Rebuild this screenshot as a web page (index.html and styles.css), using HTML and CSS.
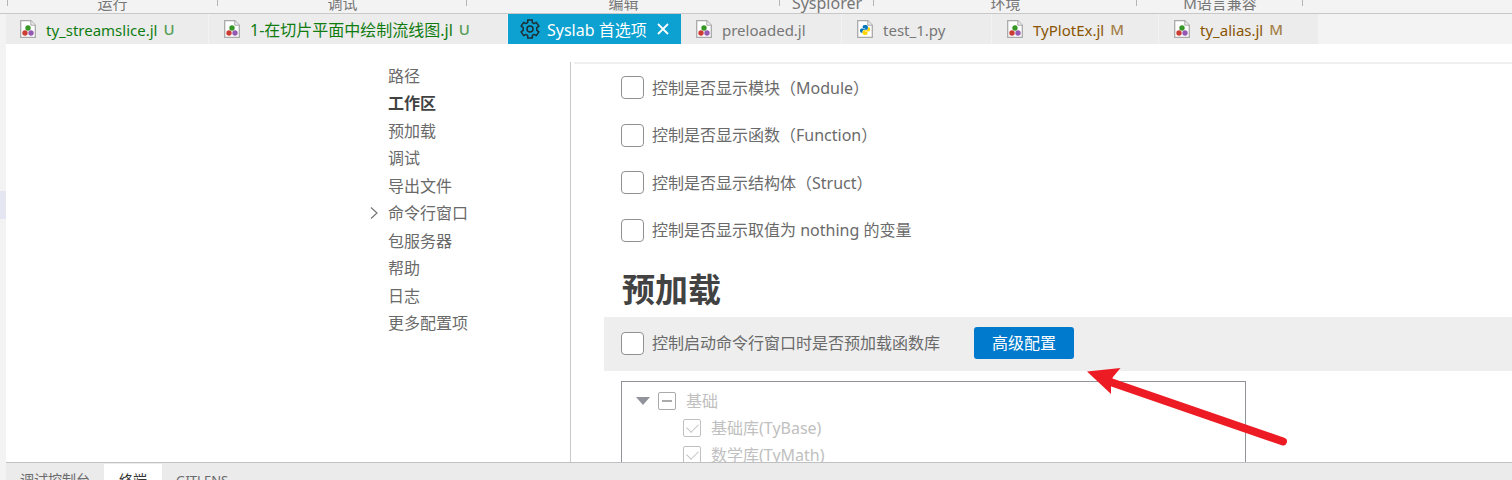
FILE: index.html
```html
<!DOCTYPE html>
<html lang="zh-CN">
<head>
<meta charset="utf-8">
<title>Syslab 首选项</title>
<link rel="stylesheet" href="styles.css">
</head>
<body>
<svg class="defs" aria-hidden="true">
  <symbol id="page" viewBox="0 0 16 18">
    <path d="M.7.7h10.1l4.5 4.5v12.1H.7z" fill="#fff" stroke="#a9a9a9" stroke-width="1.3"/>
    <path d="M10.8.7v4.5h4.5" fill="#eee" stroke="#a9a9a9"/>
  </symbol>
  <symbol id="julia" viewBox="0 0 16 18">
    <use href="#page"/>
    <circle cx="8" cy="8" r="2.7" fill="#389826"/>
    <circle cx="5" cy="13" r="2.7" fill="#cb3c33"/>
    <circle cx="11" cy="13" r="2.7" fill="#9558b2"/>
  </symbol>
  <symbol id="python" viewBox="0 0 16 18">
    <use href="#page"/>
    <path d="M8 5c-2 0-2.3.8-2.3 1.7V8h2.6v.6H4.6C3.500 8.600 3 9.500 3 10.700s.6 2 1.600 2h1v-1.400c0-.9.7-1.500 1.600-1.500h2.300c.8 0 1.400-.6 1.400-1.400V6.700C10.900 5.500 10 5 8 5z" fill="#0277bd"/>
    <path d="M8.200 15c2 0 2.300-.8 2.300-1.700V12H7.900v-.6h3.700c1.100 0 1.600-.9 1.600-2.100s-.6-2-1.600-2h-.7v1.400c0 .9-.7 1.500-1.600 1.500H7c-.8 0-1.400.6-1.400 1.400v1.700C5.600 14.500 6.200 15 8.200 15z" fill="#ffd400"/>
  </symbol>
</svg>

<header class="ribbon">
  <div class="ribbon-group">运行</div>
  <div class="ribbon-group">调试</div>
  <div class="ribbon-group">编辑</div>
  <div class="ribbon-group ribbon-latin">Sysplorer</div>
  <div class="ribbon-group">环境</div>
  <div class="ribbon-group">M语言兼容</div>
</header>

<div class="workbench">
  <aside class="rail"><div class="rail-mark"></div></aside>
  <div class="main">
    <nav class="tabs">
      <button class="tab tab-first added"><svg class="file-icon"><use href="#julia"/></svg><span class="name">ty_streamslice.jl</span><span class="status">U</span></button>
      <button class="tab tab-wide added"><svg class="file-icon"><use href="#julia"/></svg><span class="name cjk">1-在切片平面中绘制流线图.jl</span><span class="status">U</span></button>
      <div class="tab tab-active">
        <svg class="gear" viewBox="0 0 20 20" fill="none" stroke="#1f2d33" stroke-width="1.500" stroke-linejoin="round"><path d="M7.700 1h4.600v2.600l1.800 1 2.200-1.300 2.600 3.900-2.100 1.400v2.800l2.100 1.400-2.600 3.900-2.200-1.300-1.800 1V19H7.700v-2.600l-1.800-1-2.200 1.300-2.600-3.900 2.100-1.400V8.600L1.100 7.200l2.600-3.900 2.200 1.300 1.800-1z"/><circle cx="10" cy="10" r="3"/></svg>
        <button class="active-name">Syslab 首选项</button>
        <button class="close" aria-label="关闭"><svg viewBox="0 0 12 12"><path d="M1 1l10 10M11 1L1 11" stroke="#fff" stroke-width="1.800"/></svg></button>
      </div>
      <button class="tab tab-medium"><svg class="file-icon"><use href="#julia"/></svg><span class="name">preloaded.jl</span></button>
      <button class="tab tab-small"><svg class="file-icon"><use href="#python"/></svg><span class="name">test_1.py</span></button>
      <button class="tab tab-normal modified"><svg class="file-icon"><use href="#julia"/></svg><span class="name">TyPlotEx.jl</span><span class="status">M</span></button>
      <button class="tab tab-last modified"><svg class="file-icon"><use href="#julia"/></svg><span class="name">ty_alias.jl</span><span class="status">M</span></button>
    </nav>

    <div class="editor">
      <nav class="toc">
        <ul class="toc-list">
          <li><a href="#">路径</a></li>
          <li><a class="current" href="#">工作区</a></li>
          <li><a href="#">预加载</a></li>
          <li><a href="#">调试</a></li>
          <li><a href="#">导出文件</a></li>
          <li class="has-children"><svg class="chevron" viewBox="0 0 8 12"><path d="M1 .5L7 6l-6 5.500" fill="none" stroke="#777" stroke-width="1.200"/></svg><a href="#">命令行窗口</a></li>
          <li><a href="#">包服务器</a></li>
          <li><a href="#">帮助</a></li>
          <li><a href="#">日志</a></li>
          <li><a href="#">更多配置项</a></li>
        </ul>
      </nav>
      <main class="settings">
        <div class="scroll-shadow"></div>
        <div class="options">
          <label class="option"><input class="check" type="checkbox">控制是否显示模块（Module）</label>
          <label class="option"><input class="check" type="checkbox">控制是否显示函数（Function）</label>
          <label class="option"><input class="check" type="checkbox">控制是否显示结构体（Struct）</label>
          <label class="option"><input class="check" type="checkbox">控制是否显示取值为 nothing 的变量</label>
        </div>
        <h2 class="heading">预加载</h2>
        <div class="focused">
          <label class="option"><input class="check" type="checkbox">控制启动命令行窗口时是否预加载函数库</label>
          <button class="primary">高级配置</button>
        </div>
        <div class="tree">
          <div class="tree-row"><svg class="caret" viewBox="0 0 14 8"><path d="M0 0h14L7 8z" fill="#909399"/></svg><label class="tree-label"><input class="tree-check partial" type="checkbox" disabled>基础</label></div>
          <div class="tree-row child"><label class="tree-label"><input class="tree-check ticked" type="checkbox" checked disabled>基础库(TyBase)</label></div>
          <div class="tree-row child"><label class="tree-label"><input class="tree-check ticked" type="checkbox" checked disabled>数学库(TyMath)</label></div>
        </div>
      </main>
    </div>

    <footer class="panel">
      <button class="panel-tab">调试控制台</button>
      <button class="panel-tab selected">终端</button>
      <button class="panel-tab latin">GITLENS</button>
    </footer>
  </div>
</div>

<svg class="arrow" viewBox="0 0 202 80" aria-hidden="true">
  <path d="M22 13.500L196 73.500" stroke="#ed1c24" stroke-width="8" stroke-linecap="round"/>
  <path d="M0 3.500L33.500 0 26 9 24 14v12z" fill="#ed1c24"/>
</svg>
</body>
</html>
```
FILE: styles.css
```css
* { box-sizing: border-box; }

body {
  position: relative;
  display: flex;
  flex-direction: column;
  height: 100vh;
  margin: 0;
  overflow: hidden;
  background: #fff;
  color: #6a6a6a;
  font: 16px/24px "Noto Sans", "Noto Sans CJK SC", sans-serif;
}

button {
  margin: 0;
  padding: 0;
  border: 0;
  background: none;
  color: inherit;
  font: inherit;
  white-space: nowrap;
}

a { color: inherit; text-decoration: none; }

.defs { position: absolute; width: 0; height: 0; }

/* Ribbon, scrolled so that only the foot of each group shows */
.ribbon {
  display: grid;
  grid-template-columns: 210px 249px 313px 94px 263px 166px;
  align-content: end;
  flex: none;
  height: 14px;
  padding-left: 8px;
  overflow: hidden;
  border-bottom: 1px solid #c8c8c8;
  background: #f3f3f3;
  color: #777;
  font-size: 15px;
}

.ribbon-group {
  height: 20px;
  text-align: center;
  line-height: 20px;
  background: linear-gradient(#b5b5b5, #b5b5b5) right top / 1px 13px no-repeat;
}

.ribbon-group:first-child {
  margin-left: -1px;
  background:
    linear-gradient(#b5b5b5, #b5b5b5) left top / 1px 13px no-repeat,
    linear-gradient(#b5b5b5, #b5b5b5) right top / 1px 13px no-repeat;
}

.ribbon-latin { font-size: 16px; }

/* Workbench */
.workbench { display: flex; flex: 1; min-height: 0; }

.rail {
  flex: none;
  width: 6px;
  padding-top: 177px;
  background: #f3f3f3;
}

.rail-mark { height: 28px; background: #e4e6f1; }

.main {
  display: flex;
  flex: 1;
  flex-direction: column;
  min-width: 0;
}

/* Tabs */
.tabs {
  display: flex;
  flex: none;
  height: 30px;
  background: #f3f3f3;
}

.tab {
  display: flex;
  flex: none;
  align-items: center;
  padding-left: 15px;
  border-right: 1px solid #f3f3f3;
  background: #ececec;
  color: #777;
  font-size: 15px;
}

.tab-first { width: 203px; padding-left: 14px; }
.tab-wide { width: 299px; }
.tab-active { width: 173px; padding-left: 12px; border: 0; background: #0ca1d0; color: #fff; }
.tab-medium { width: 161px; }
.tab-small { width: 150px; }
.tab-normal { width: 167px; }
.tab-last { width: 159px; border: 0; }

.file-icon { width: 16px; height: 18px; margin-right: 10px; }
.name { padding-top: 2px; }
.cjk, .active-name { font-size: 16px; }
.active-name { padding-top: 2px; }
.status { margin-left: 6px; font-weight: 500; opacity: .7; }
.added { color: #107c10; }
.modified { color: #895503; }
.gear { width: 20px; height: 20px; margin-right: 7px; }
.close { width: 12px; height: 12px; margin-left: 10px; }
.close svg { display: block; width: 12px; height: 12px; }

/* Preferences */
.editor {
  display: flex;
  flex: 1;
  min-height: 0;
  padding-top: 18px;
  overflow: hidden;
}

.toc {
  flex: none;
  width: 565px;
  padding-left: 364px;
  border-right: 1px solid #c8c8c8;
}

.toc-list {
  display: grid;
  grid-auto-rows: 1fr;
  height: 275px;
  margin: 0;
  padding: 0 0 0 18px;
  list-style: none;
}

.toc-list li { display: flex; align-items: center; }
.current { color: #424242; font-weight: 700; }
.has-children { margin-left: -18px; }
.chevron { width: 8px; height: 12px; margin-right: 10px; }

.settings { flex: 1; min-width: 0; }

.scroll-shadow {
  height: 2px;
  margin-left: 3px;
  background: #efefef;
}

.options {
  display: grid;
  grid-auto-rows: 1fr;
  height: 190px;
  margin-left: 50px;
}

.option { display: flex; align-items: center; }

.check {
  flex: none;
  width: 23px;
  height: 23px;
  margin: 0 8px 0 0;
  border: 1px solid #919191;
  border-radius: 4px;
  background: #fff;
  appearance: none;
}

.heading {
  height: 63px;
  margin: 0 0 0 51px;
  color: #424242;
  font-size: 33px;
  font-weight: 700;
  line-height: 72px;
}

.focused {
  display: flex;
  align-items: center;
  gap: 34px;
  height: 54px;
  margin-left: 33px;
  padding: 0 0 2px 17px;
  background: #eee;
}

.primary {
  width: 100px;
  height: 32px;
  border-radius: 3px;
  background: #007acc;
  color: #fff;
}

.tree {
  width: 625px;
  height: 240px;
  margin: 10px 0 0 50px;
  padding: 5px 14px;
  border: 1px solid #909399;
  color: #c0c0c0;
}

.tree-row { display: flex; align-items: center; height: 27px; }
.child { padding-left: 47px; }
.tree-label { display: flex; align-items: center; }
.caret { width: 14px; height: 8px; margin-right: 8px; }

.tree-check {
  display: grid;
  place-items: center;
  width: 18px;
  height: 18px;
  margin: 0 10px 0 0;
  border: 1px solid #c0c0c0;
  border-radius: 2px;
  appearance: none;
}

.partial { border-color: #aaa; }
.partial::before { content: ""; width: 10px; height: 2px; background: #aaa; }

.ticked::before {
  content: "";
  width: 10px;
  height: 6px;
  margin-bottom: 3px;
  border: solid #c0c0c0;
  border-width: 0 0 1px 1px;
  transform: rotate(-45deg);
}

/* Bottom panel */
.panel {
  display: flex;
  align-items: flex-start;
  flex: none;
  height: 18px;
  padding-top: 1px;
  overflow: hidden;
  border-top: 1px solid #c0c0c0;
  background: #ebebeb;
  font-size: 14px;
}

.panel-tab { height: 32px; padding: 0 14px; line-height: 32px; }
.selected { padding: 0 15px; background: #fff; color: #333; }
.latin { font-size: 13px; }

/* Pointer to the advanced configuration button */
.arrow {
  position: absolute;
  top: 368px;
  left: 1087px;
  width: 202px;
  height: 80px;
  pointer-events: none;
}
```
